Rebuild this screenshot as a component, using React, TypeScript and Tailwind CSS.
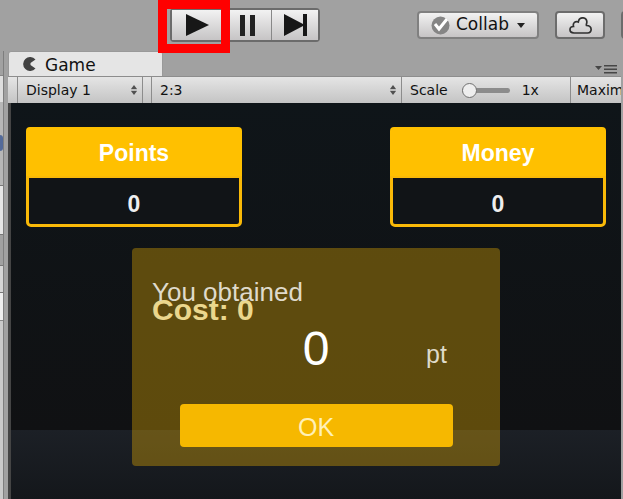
import React from 'react';

const face = 'bg-gradient-to-b from-[#f2f2f2] to-[#c6c4c5]';

function SelectArrows() {
  return (
    <svg className="pointer-events-none col-start-1 row-start-1 mr-1 h-2.5 w-2 self-center justify-self-end" viewBox="0 0 8 10" fill="#505050">
      <path d="M4 0 7 4H1zM4 10 1 6h6z" />
      <path d="M1 4.5h6v1H1z" opacity=".35" />
    </svg>
  );
}

function Picker({ label, value, className }: { label: string; value: string; className: string }) {
  return (
    <div className={`grid h-full shrink-0 items-center border-r border-[#8c8c8c] ${className}`}>
      <select aria-label={label} className="col-start-1 row-start-1 w-full appearance-none bg-transparent pl-2 outline-none">
        <option>{value}</option>
      </select>
      <SelectArrows />
    </div>
  );
}

function Counter({ title, value }: { title: string; value: string }) {
  return (
    <section className="w-[216px] text-center text-[23px] font-bold text-white">
      <h2 className="h-[49px] rounded-t-[4px] bg-[#ffc000] pt-2.5 leading-8">{title}</h2>
      <p className="h-[51px] rounded-b-[5px] border-[3px] border-t-2 border-[#f9b908] bg-[#111417] pt-2.5 leading-8 text-[#eeeeee]">{value}</p>
    </section>
  );
}

function Toolbar() {
  return (
    <header className="flex h-[51px] shrink-0 items-start">
      <div className="relative z-10 ml-[170px] mt-2 flex h-[34px] shrink-0 rounded-[4px] border-2 border-[#6b6b6b]">
        <button aria-label="Play" className={`flex w-[49px] items-center justify-center ${face}`}>
          <svg className="h-[22px] w-6" viewBox="0 0 24 22" fill="#171717"><path d="M1 0 24 11 1 22z" /></svg>
        </button>
        <button aria-label="Pause" className={`flex w-[50px] items-center justify-center border-l border-[#999] ${face}`}>
          <svg className="h-[21px] w-4" viewBox="0 0 16 21" fill="#222"><path d="M1 0h5v21H1zM11 0h5v21h-5z" /></svg>
        </button>
        <button aria-label="Step" className={`flex w-[47px] items-center justify-center border-l border-[#888] ${face}`}>
          <svg className="h-[22px] w-6" viewBox="0 0 24 22" fill="#171717"><path d="M1 0 20 10V0h4v22h-4V12L1 22z" /></svg>
        </button>
        <span className="pointer-events-none absolute -left-3.5 -top-2.5 h-[53px] w-[72px] border-[9px] border-[#ff0000]" />
      </div>
      <div className="ml-[97px] mt-[11px] flex h-7 shrink-0 gap-4 text-[17px]">
        <button className={`flex w-[122px] items-center rounded-[4px] border-2 border-[#808080] pl-3 ${face}`}>
          <svg className="mr-1.5 h-[19px] w-[19px] shrink-0" viewBox="0 0 19 19">
            <circle cx="9.500" cy="9.500" r="9" fill="#858585" />
            <path d="m4 8 4 5 8-10" fill="none" stroke="#fff" strokeWidth="3" />
          </svg>
          Collab
          <svg className="ml-2 h-[5px] w-2 shrink-0" viewBox="0 0 8 5"><path d="M0 0h8L4 5z" fill="#222" /></svg>
        </button>
        <button aria-label="Cloud" className={`flex w-[50px] items-center justify-center rounded-[4px] border-2 border-[#6c6c6c] ${face}`}>
          <svg className="h-[17px] w-[23px]" viewBox="0 0 23 17" fill="none" stroke="#303030" strokeWidth="1.700">
            <path d="M5 16C-.5 16 0 9.500 4.500 9.500 3.500 5.500 6.500 4 9.300 5 10-.8 18.500-.5 17.800 5.500 17.700 6.800 17 7.500 17.500 8.500 23.500 8.500 23.500 16 18.500 16z" />
          </svg>
        </button>
        <button aria-label="Account" className={`w-24 rounded-[4px] border-2 border-[#6c6c6c] ${face}`} />
      </div>
    </header>
  );
}

function Neighbour() {
  return (
    <aside className="flex w-1 shrink-0 flex-col border-r border-[#7e7e7e] bg-[#b6b6b6]">
      <div className="h-6 bg-[#a1a1a1]" />
      <div className="h-[27px] border-t border-[#858585] bg-[#dedede]" />
      <div className="h-[33px]" />
      <div className="h-4 rounded-r-full bg-[#536a99]" />
      <div className="mt-[34px] h-[50px] border-y border-[#777] bg-[#e5e5e5]" />
      <div className="h-[30px] bg-[#a1a1a1]" />
      <div className="h-7 border-y border-[#777] bg-[#d5d5d5]" />
      <div className="h-7 border-b border-[#888] bg-[#eeeeee]" />
      <div className="grow bg-[#cacaca]" />
    </aside>
  );
}

function Dialog() {
  return (
    <section role="dialog" aria-label="Result" className="mx-auto mt-[21px] h-[218px] w-[368px] shrink-0 rounded-[4px] bg-[#ffc000]/33 px-5 pt-7">
      <div className="grid">
        <p className="col-start-1 row-start-1 mt-[18px] text-[30px] font-bold leading-8 text-[#ebd78d]">Cost: 0</p>
        <p className="col-start-1 row-start-1 text-[26px] leading-8 text-[#dfdacb]">You obtained</p>
      </div>
      <div className="grid h-[66px] grid-cols-[1fr_40px_1fr]">
        <p className="col-start-2 text-center text-5xl leading-[46px] text-white">0</p>
        <p className="mt-3 pl-[90px] text-[25px] leading-8 text-[#dedac9]">pt</p>
      </div>
      <button className="mx-auto mt-3 block h-[43px] w-[273px] rounded-[4px] bg-[#f6b800] pt-1 text-[25px] text-[#fff0b8]">OK</button>
    </section>
  );
}

export default function App() {
  return (
    <div className="flex h-screen flex-col overflow-hidden bg-[#a1a1a1] font-['DejaVu_Sans',sans-serif] text-[#111]">
      <Toolbar />
      <div className="flex min-h-0 grow">
        <Neighbour />
        <main className="ml-1 mr-0.5 flex min-w-0 grow flex-col">
          <div className="flex h-[25px] shrink-0 items-end justify-between">
            <div className="flex h-[25px] w-[155px] items-center rounded-t-[3px] border border-b-0 border-[#999] bg-[#e5e5e5] pl-3.5 pt-1 text-[17px]">
              <svg className="mb-1 mr-2 h-3.5 w-3.5" viewBox="0 0 14 14"><path d="M12.500 2.500A7 7 0 1 0 12.500 11.500L7.500 8V6z" fill="#424242" /></svg>
              Game
            </div>
            <svg className="mb-0.5 mr-1 h-2.5 w-[22px]" viewBox="0 0 22 10" fill="#464646"><path d="M0 2h7L3.500 6zM9 1h13v1.500H9zM9 4.500h13V6H9zM9 8h13v1.500H9z" /></svg>
          </div>
          <div className="flex h-[27px] shrink-0 items-center overflow-hidden border-t border-[#8d8d8d] bg-gradient-to-b from-[#e5e5e5] to-[#c4c4c4] text-sm">
            <div className="h-full w-[10px] shrink-0 border-r border-[#8c8c8c]" />
            <Picker label="Display" value="Display 1" className="w-[125px]" />
            <div className="h-full w-[9px] shrink-0 border-r border-[#8c8c8c]" />
            <Picker label="Aspect ratio" value="2:3" className="w-[250px]" />
            <label className="flex h-full w-[169px] shrink-0 items-center border-r border-[#8c8c8c] pl-2">
              Scale
              <input type="range" min="1" max="5" defaultValue="1" className="ml-3.5 h-4 w-12 appearance-none bg-transparent [&::-webkit-slider-runnable-track]:h-[5px] [&::-webkit-slider-runnable-track]:rounded-full [&::-webkit-slider-runnable-track]:bg-[#8c8c8c] [&::-webkit-slider-thumb]:-mt-[5px] [&::-webkit-slider-thumb]:h-[15px] [&::-webkit-slider-thumb]:w-[15px] [&::-webkit-slider-thumb]:appearance-none [&::-webkit-slider-thumb]:rounded-full [&::-webkit-slider-thumb]:border [&::-webkit-slider-thumb]:border-[#707070] [&::-webkit-slider-thumb]:bg-[#eeeeee]" />
              <output className="ml-3">1x</output>
            </label>
            <button className="shrink-0 pl-1.5">Maximize On Play</button>
          </div>
          <div className="flex min-h-0 grow flex-col border-l-3 border-[#444] bg-[linear-gradient(to_bottom,#0f1519,#101113_327px,#1c2026_327px,#14171b)] px-[15px] font-['Liberation_Sans',Arial,sans-serif]">
            <div className="flex justify-between pt-6">
              <Counter title="Points" value="0" />
              <Counter title="Money" value="0" />
            </div>
            <Dialog />
          </div>
        </main>
      </div>
    </div>
  );
}
